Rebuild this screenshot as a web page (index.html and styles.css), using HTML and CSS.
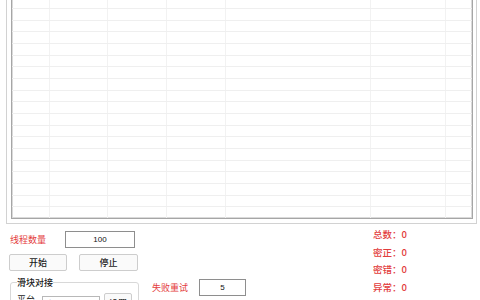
FILE: index.html
```html
<!DOCTYPE html>
<html lang="zh-CN">
<head>
<meta charset="utf-8">
<title>滑块</title>
<link rel="stylesheet" href="styles.css">
</head>
<body>
<div class="panel">
  <div class="grid">
    <div class="row first"><span class="cell c1"></span><span class="cell c2"></span><span class="cell c3"></span><span class="cell c4"></span><span class="cell c5"></span><span class="cell c6"></span><span class="cell c7"></span></div>
    <div class="row"><span class="cell c1"></span><span class="cell c2"></span><span class="cell c3"></span><span class="cell c4"></span><span class="cell c5"></span><span class="cell c6"></span><span class="cell c7"></span></div>
    <div class="row"><span class="cell c1"></span><span class="cell c2"></span><span class="cell c3"></span><span class="cell c4"></span><span class="cell c5"></span><span class="cell c6"></span><span class="cell c7"></span></div>
    <div class="row"><span class="cell c1"></span><span class="cell c2"></span><span class="cell c3"></span><span class="cell c4"></span><span class="cell c5"></span><span class="cell c6"></span><span class="cell c7"></span></div>
    <div class="row"><span class="cell c1"></span><span class="cell c2"></span><span class="cell c3"></span><span class="cell c4"></span><span class="cell c5"></span><span class="cell c6"></span><span class="cell c7"></span></div>
    <div class="row"><span class="cell c1"></span><span class="cell c2"></span><span class="cell c3"></span><span class="cell c4"></span><span class="cell c5"></span><span class="cell c6"></span><span class="cell c7"></span></div>
    <div class="row"><span class="cell c1"></span><span class="cell c2"></span><span class="cell c3"></span><span class="cell c4"></span><span class="cell c5"></span><span class="cell c6"></span><span class="cell c7"></span></div>
    <div class="row"><span class="cell c1"></span><span class="cell c2"></span><span class="cell c3"></span><span class="cell c4"></span><span class="cell c5"></span><span class="cell c6"></span><span class="cell c7"></span></div>
    <div class="row"><span class="cell c1"></span><span class="cell c2"></span><span class="cell c3"></span><span class="cell c4"></span><span class="cell c5"></span><span class="cell c6"></span><span class="cell c7"></span></div>
    <div class="row"><span class="cell c1"></span><span class="cell c2"></span><span class="cell c3"></span><span class="cell c4"></span><span class="cell c5"></span><span class="cell c6"></span><span class="cell c7"></span></div>
    <div class="row"><span class="cell c1"></span><span class="cell c2"></span><span class="cell c3"></span><span class="cell c4"></span><span class="cell c5"></span><span class="cell c6"></span><span class="cell c7"></span></div>
    <div class="row"><span class="cell c1"></span><span class="cell c2"></span><span class="cell c3"></span><span class="cell c4"></span><span class="cell c5"></span><span class="cell c6"></span><span class="cell c7"></span></div>
    <div class="row"><span class="cell c1"></span><span class="cell c2"></span><span class="cell c3"></span><span class="cell c4"></span><span class="cell c5"></span><span class="cell c6"></span><span class="cell c7"></span></div>
    <div class="row"><span class="cell c1"></span><span class="cell c2"></span><span class="cell c3"></span><span class="cell c4"></span><span class="cell c5"></span><span class="cell c6"></span><span class="cell c7"></span></div>
    <div class="row"><span class="cell c1"></span><span class="cell c2"></span><span class="cell c3"></span><span class="cell c4"></span><span class="cell c5"></span><span class="cell c6"></span><span class="cell c7"></span></div>
    <div class="row"><span class="cell c1"></span><span class="cell c2"></span><span class="cell c3"></span><span class="cell c4"></span><span class="cell c5"></span><span class="cell c6"></span><span class="cell c7"></span></div>
    <div class="row"><span class="cell c1"></span><span class="cell c2"></span><span class="cell c3"></span><span class="cell c4"></span><span class="cell c5"></span><span class="cell c6"></span><span class="cell c7"></span></div>
    <div class="row"><span class="cell c1"></span><span class="cell c2"></span><span class="cell c3"></span><span class="cell c4"></span><span class="cell c5"></span><span class="cell c6"></span><span class="cell c7"></span></div>
    <div class="row"><span class="cell c1"></span><span class="cell c2"></span><span class="cell c3"></span><span class="cell c4"></span><span class="cell c5"></span><span class="cell c6"></span><span class="cell c7"></span></div>
  </div>
</div>

<div class="bottom">
  <div class="left">
    <div class="row1">
      <span class="lbl red">线程数量</span>
      <span class="input w70">100</span>
    </div>
    <div class="row2">
      <span class="btn">开始</span>
      <span class="btn stop">停止</span>
    </div>
    <fieldset class="group">
      <legend>滑块对接</legend>
      <div class="grow">
        <span class="plat">平台</span>
        <span class="combo">打码</span>
        <span class="btn small">设置</span>
      </div>
    </fieldset>
  </div>
  <div class="mid">
    <span class="lbl2 red">失败重试</span>
    <span class="input w47">5</span>
  </div>
  <div class="stats">
    <div class="stat">总数：0</div>
    <div class="stat">密正：0</div>
    <div class="stat">密错：0</div>
    <div class="stat">异常：0</div>
  </div>
</div>
</body>
</html>
```

FILE: styles.css
```css
html, body {
  margin: 0;
  background: #ffffff;
}
body {
  width: 480px;
  height: 300px;
  overflow: hidden;
  font-family: "Noto Sans CJK SC", "Noto Sans", sans-serif;
  font-size: 9px;
  color: #222;
}

/* top panel with the data grid */
.panel {
  margin-left: 6px;
  width: 471px;
  height: 224px;
  box-sizing: border-box;
  border: 1px solid #d2d2d2;
  border-top: 0;
  padding: 0 3px 4px 4px;
}
.grid {
  height: 219px;
  box-sizing: border-box;
  border: 1px solid #a6a6a6;
  border-top: 0;
  overflow: hidden;
  box-shadow: inset 1px 0 #dadada, inset -1px 0 #dadada, inset 0 -1px #dadada;
}
.row {
  display: flex;
  height: calc(35px / 3);
  box-sizing: border-box;
  border-bottom: 1px solid #efefef;
}
.row.first { height: 9px; }
.cell {
  flex: none;
  box-sizing: border-box;
  border-right: 1px solid #f2f2f2;
}
.c1 { width: 38px; }
.c2 { width: 58px; }
.c3, .c4 { width: 59px; }
.c5 { width: 145px; }
.c6 { width: 75px; }
.c7 { width: 26px; border-right: 0; }

/* bottom controls */
.bottom {
  display: flex;
  padding-left: 9px;
}
.red { color: #e43c3c; }

.left {
  flex: none;
  width: 130px;
}
.row1 {
  display: flex;
  align-items: center;
  height: 17px;
  margin-top: 7px;
}
.lbl {
  box-sizing: border-box;
  width: 56px;
  padding-left: 1px;
  line-height: 11px;
}
.input {
  box-sizing: border-box;
  height: 17px;
  border: 1px solid #8e8e8e;
  background: #fff;
  display: flex;
  align-items: center;
  justify-content: center;
  font-family: "Liberation Sans", Arial, sans-serif;
  font-size: 8px;
  color: #111;
}
.w70 { width: 70px; }
.w47 { width: 47px; }

.row2 {
  display: flex;
  gap: 12px;
  margin-top: 6px;
}
.btn {
  box-sizing: border-box;
  width: 58px;
  height: 17px;
  border: 1px solid #cdcdcd;
  border-radius: 2px;
  background: #fafafa;
  display: flex;
  align-items: center;
  justify-content: center;
  font-size: 9px;
  font-weight: 500;
  color: #1a1a1a;
}
.btn.stop { width: 59px; }

.group {
  margin: 6px 0 0 1px;
  width: 129px;
  min-width: 0;
  box-sizing: border-box;
  border: 1px solid #d8d8d8;
  border-radius: 3px;
  padding: 5px 0 0 6px;
}
.group legend {
  padding: 0;
  line-height: 11px;
  font-size: 9px;
  font-weight: 500;
  color: #1a1a1a;
}
.grow {
  display: flex;
  align-items: flex-start;
}
.plat {
  width: 25px;
  line-height: 11px;
  margin-top: 1px;
}
.combo {
  box-sizing: border-box;
  width: 58px;
  height: 17px;
  margin-top: 3px;
  border: 1px solid #b8b8b8;
  padding-left: 5px;
  line-height: 15px;
}
.btn.small {
  width: 28px;
  height: 20px;
  margin-left: 4px;
}

.mid {
  flex: none;
  display: flex;
  align-items: center;
  height: 17px;
  margin-top: 55px;
  margin-left: 13px;
}
.lbl2 {
  width: 47px;
  line-height: 11px;
}

.stats {
  flex: none;
  margin-left: 127px;
  margin-top: 2px;
}
.stat {
  height: 17.5px;
  line-height: 17.5px;
  font-size: 9.5px;
  font-weight: 500;
  color: #e23c3c;
  white-space: nowrap;
}
```
